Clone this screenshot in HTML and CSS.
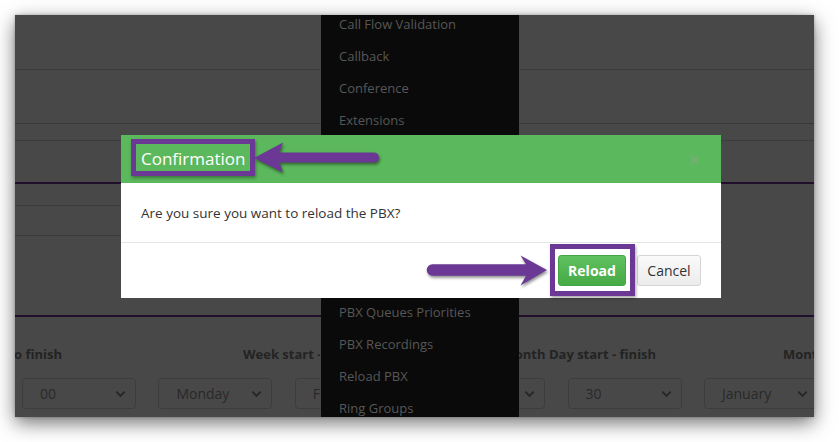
FILE: index.html
```html
<!DOCTYPE html>
<html>
<head>
<meta charset="utf-8">
<link rel="stylesheet" href="styles.css">
</head>
<body>
<div class="window">
  <div class="page">
    <div class="row r1"></div>
    <div class="row r2"></div>
    <div class="row r3"></div>
    <div class="row r4"></div>
    <div class="field"></div>
    <div class="section-end"></div>
    <div class="labels">
      <div class="lbl lbl1"><span>Hour start to finish</span></div>
      <div class="lbl lbl2"><span>Week start -</span></div>
      <div class="lbl lbl3"><span>Month Day start - finish</span></div>
      <div class="lbl lbl4">Month start - finish</div>
    </div>
    <div class="selects">
      <div class="sel"><span>00</span><svg class="chev" viewBox="0 0 12 8"><path d="M1.5 1.5 L6 6 L10.5 1.5" /></svg></div>
      <div class="sel"><span>Monday</span><svg class="chev" viewBox="0 0 12 8"><path d="M1.5 1.5 L6 6 L10.5 1.5" /></svg></div>
      <div class="sel sel-under"><span>Friday</span><svg class="chev" viewBox="0 0 12 8"><path d="M1.5 1.5 L6 6 L10.5 1.5" /></svg></div>
      <div class="sel"><span></span><svg class="chev" viewBox="0 0 12 8"><path d="M1.5 1.5 L6 6 L10.5 1.5" /></svg></div>
      <div class="sel"><span>30</span><svg class="chev" viewBox="0 0 12 8"><path d="M1.5 1.5 L6 6 L10.5 1.5" /></svg></div>
      <div class="sel"><span>January</span><svg class="chev" viewBox="0 0 12 8"><path d="M1.5 1.5 L6 6 L10.5 1.5" /></svg></div>
    </div>
  </div>

  <ul class="menu">
    <li>Call Flow Validation</li>
    <li>Callback</li>
    <li>Conference</li>
    <li>Extensions</li>
    <li class="menu-gap"></li>
    <li>PBX Queues Priorities</li>
    <li>PBX Recordings</li>
    <li>Reload PBX</li>
    <li>Ring Groups</li>
  </ul>

  <div class="modal">
    <div class="modal-header">
      <span class="title">Confirmation</span>
      <span class="close">&times;</span>
    </div>
    <div class="modal-body">Are you sure you want to reload the PBX?</div>
    <div class="modal-footer">
      <button class="btn btn-success">Reload</button>
      <button class="btn btn-default">Cancel</button>
    </div>
  </div>
</div>

<svg class="arrows" width="839" height="442" viewBox="0 0 839 442">
  <path d="M254,158 L283,142.5 L279.5,152.6 L374,152.6 A5,5 0 0 1 374,162.6 L279.5,162.6 L283,172.5 Z" />
  <path d="M547,270 L520.5,255.5 L526,264.3 L432.4,264.3 A5.7,5.7 0 0 0 432.4,275.7 L526,275.7 L520.5,285.5 Z" />
</svg>
</body>
</html>
```

FILE: styles.css
```css
*, *::before, *::after { box-sizing: border-box; }
html, body { margin: 0; padding: 0; }
body {
  width: 839px;
  height: 442px;
  background: #ffffff;
  font-family: "Open Sans", "Liberation Sans", sans-serif;
  position: relative;
  overflow: hidden;
}

.window {
  position: relative;
  margin: 15px 0 0 15px;
  width: 799px;
  height: 402px;
  background: #484848;
  overflow: hidden;
  box-shadow: 0 6px 18px rgba(0,0,0,0.55), 0 0 3px rgba(0,0,0,0.25);
}

.page { display: flex; flex-direction: column; }
.row { border-bottom: 1px solid #3c3c3c; }
.r1 { height: 55px; }
.r2 { height: 54px; border-bottom-color: #383838; }
.r3 { height: 17px; }
.r4 { height: 43px; border-bottom: 2px solid #1f0f2a; }
.field {
  margin-top: 21px;
  width: 360px;
  height: 31px;
  border-top: 1px solid #3c3c3c;
  border-bottom: 1px solid #3c3c3c;
}
.section-end {
  height: 81px;
  border-bottom: 2px solid #1f0f2a;
}

.labels {
  display: flex;
  margin-top: 27px;
  height: 20px;
  line-height: 20px;
  font-size: 13px;
  font-weight: 700;
  color: #232323;
  white-space: nowrap;
}
.lbl { flex: none; }
.lbl1 { width: 47px; display: flex; justify-content: flex-end; }
.lbl2 { margin-left: 181px; width: 77px; overflow: hidden; }
.lbl3 { margin-left: 199px; width: 264px; overflow: hidden; }
.lbl3 span { margin-left: -16.5px; }
.lbl4 { width: 60px; }

.selects {
  display: flex;
  gap: 22.4px;
  margin-top: 14px;
  padding-left: 7px;
}
.sel {
  flex: 0 0 114px;
  height: 31px;
  border: 1px solid #3d3d3d;
  border-radius: 4px;
  display: flex;
  align-items: center;
  justify-content: space-between;
  padding: 0 9px 0 17px;
  font-size: 14px;
  color: #282828;
}
.sel-under span { width: 12px; overflow: hidden; white-space: nowrap; }
.chev { width: 11px; height: 8px; }
.chev path { fill: none; stroke: #262626; stroke-width: 2; }

.menu {
  position: absolute;
  left: 306px;
  top: 0;
  width: 198px;
  height: 402px;
  margin: 0;
  padding: 0;
  list-style: none;
  background: #0a0a0a;
  overflow: hidden;
}
.menu li {
  height: 32px;
  line-height: 32px;
  padding-left: 18px;
  font-size: 13px;
  color: #575757;
  white-space: nowrap;
}
.menu li:first-child { margin-top: -7px; }
.menu li.menu-gap { height: 160px; }

.modal {
  position: absolute;
  left: 106px;
  top: 120px;
  width: 600px;
  background: #ffffff;
}
.modal-header {
  position: relative;
  height: 48px;
  background: #5cb85c;
  display: flex;
  align-items: center;
  justify-content: space-between;
  padding: 0 21px 0 20px;
}
.title {
  color: #ffffff;
  font-size: 17px;
  line-height: 24px;
}
.modal-header::before {
  content: "";
  position: absolute;
  left: 10px;
  top: 4px;
  width: 124px;
  height: 37px;
  border: 5px solid #6b3995;
  box-shadow: 1px 2px 3px rgba(0,0,0,0.35);
}
.close {
  font-size: 20px;
  font-weight: 700;
  color: #76ae74;
  line-height: 20px;
  margin-top: 2px;
}
.modal-body {
  height: 59px;
  padding: 0 20px;
  display: flex;
  align-items: center;
  font-size: 13.5px;
  color: #333333;
}
.modal-footer {
  border-top: 1px solid #e5e5e5;
  height: 56px;
  display: flex;
  justify-content: flex-end;
  align-items: flex-start;
  padding: 12px 20px 0 0;
  gap: 11px;
}
.btn {
  font-family: "Open Sans", "Liberation Sans", sans-serif;
  height: 31px;
  font-size: 14px;
  border-radius: 3px;
  padding: 0;
  margin: 0;
}
.btn-success {
  position: relative;
  width: 68px;
  color: #ffffff;
  font-weight: 700;
  background: linear-gradient(#5fc15f, #46aa46);
  border: 1px solid #44a544;
}
.btn-success::after {
  content: "";
  position: absolute;
  left: -9px;
  top: -12px;
  right: -10px;
  bottom: -11px;
  border: 5px solid #6b3995;
  box-shadow: 1px 2px 3px rgba(0,0,0,0.35);
}
.btn-default {
  width: 64px;
  color: #333333;
  background: linear-gradient(#fafafa, #ececec);
  border: 1px solid #d4d4d4;
}

.arrows {
  position: absolute;
  left: 0;
  top: 0;
  pointer-events: none;
}
.arrows path {
  fill: #6b3995;
  filter: drop-shadow(1px 2px 1.5px rgba(0,0,0,0.45));
}
```
